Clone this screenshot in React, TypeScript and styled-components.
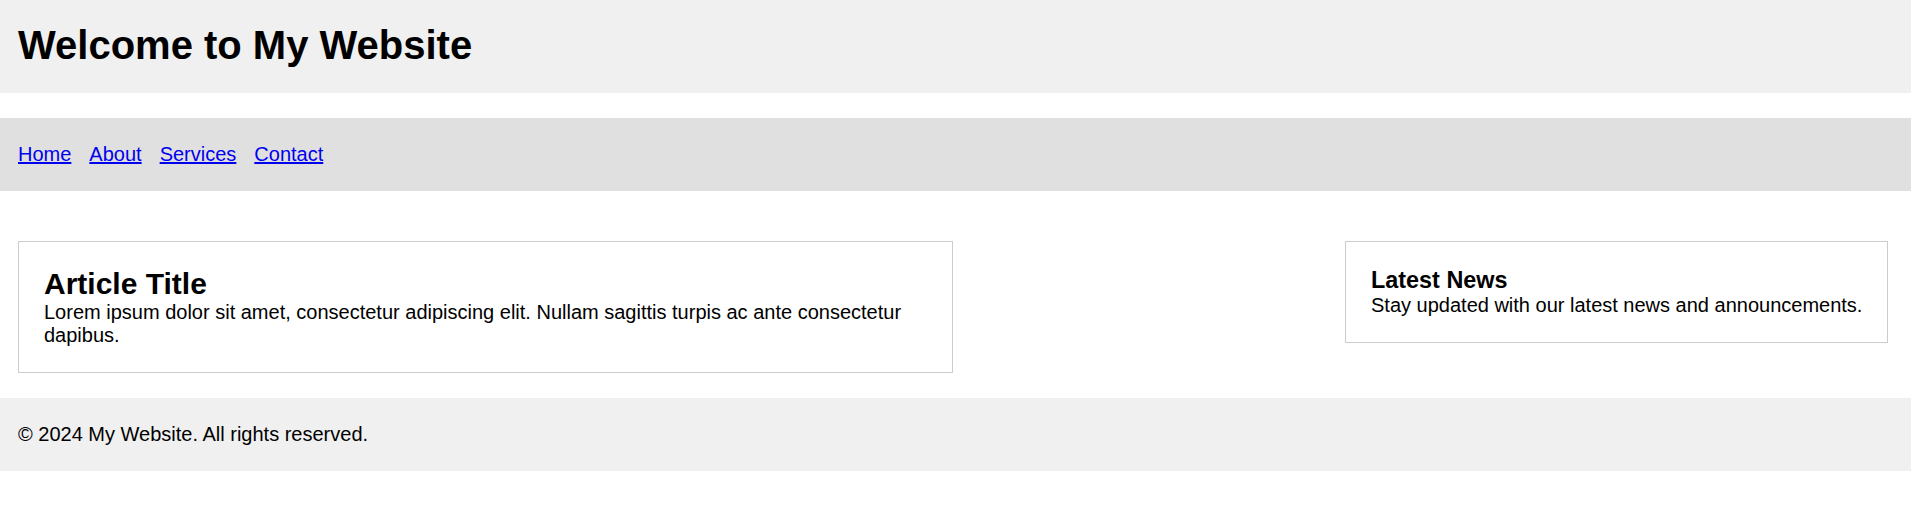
import React from "react";
import styled, { createGlobalStyle } from "styled-components";

const GlobalStyle = createGlobalStyle`
  html, body {
    margin: 0;
    padding: 0;
    background: #ffffff;
  }
  body {
    font-family: "Liberation Sans", Arial, sans-serif;
    font-size: 20px;
    line-height: normal;
    color: #000000;
  }
  * { box-sizing: border-box; }
`;

const Header = styled.header`
  background: #f0f0f0;
  height: 93px;
  padding: 22px 18px 0 18px;
`;

const SiteTitle = styled.h1`
  margin: 0;
  font-size: 40px;
  font-weight: bold;
  line-height: 46px;
`;

const Nav = styled.nav`
  margin-top: 25px;
  background: #e0e0e0;
  height: 73px;
  padding: 25px 18px 0 18px;
  display: flex;
  gap: 18px;
`;

const NavLink = styled.a`
  color: #0000ee;
  text-decoration: underline;
  font-size: 20px;
  line-height: 23px;
`;

const Main = styled.main`
  display: flex;
  justify-content: space-between;
  align-items: flex-start;
  padding: 50px 23px 25px 18px;
`;

const Card = styled.section<{ $width: number }>`
  width: ${(p) => p.$width}px;
  border: 1px solid #cccccc;
  padding: 25px 18px 25px 25px;
`;

const CardTitle = styled.h2<{ $size: number }>`
  margin: 0;
  font-size: ${(p) => p.$size}px;
  font-weight: bold;
  line-height: normal;
`;

const CardText = styled.p`
  margin: 0;
  font-size: 20px;
  line-height: 23px;
`;

const Footer = styled.footer`
  background: #f0f0f0;
  height: 73px;
  padding: 25px 18px 0 18px;
  font-size: 20px;
  line-height: 23px;
`;

export default function App() {
  return (
    <>
      <GlobalStyle />
      <Header>
        <SiteTitle>Welcome to My Website</SiteTitle>
      </Header>
      <Nav>
        <NavLink href="#">Home</NavLink>
        <NavLink href="#">About</NavLink>
        <NavLink href="#">Services</NavLink>
        <NavLink href="#">Contact</NavLink>
      </Nav>
      <Main>
        <Card $width={935}>
          <CardTitle $size={30}>Article Title</CardTitle>
          <CardText>
            Lorem ipsum dolor sit amet, consectetur adipiscing elit. Nullam sagittis turpis ac ante consectetur dapibus.
          </CardText>
        </Card>
        <Card $width={543}>
          <CardTitle as="h3" $size={23.4}>Latest News</CardTitle>
          <CardText>Stay updated with our latest news and announcements.</CardText>
        </Card>
      </Main>
      <Footer>© 2024 My Website. All rights reserved.</Footer>
    </>
  );
}
